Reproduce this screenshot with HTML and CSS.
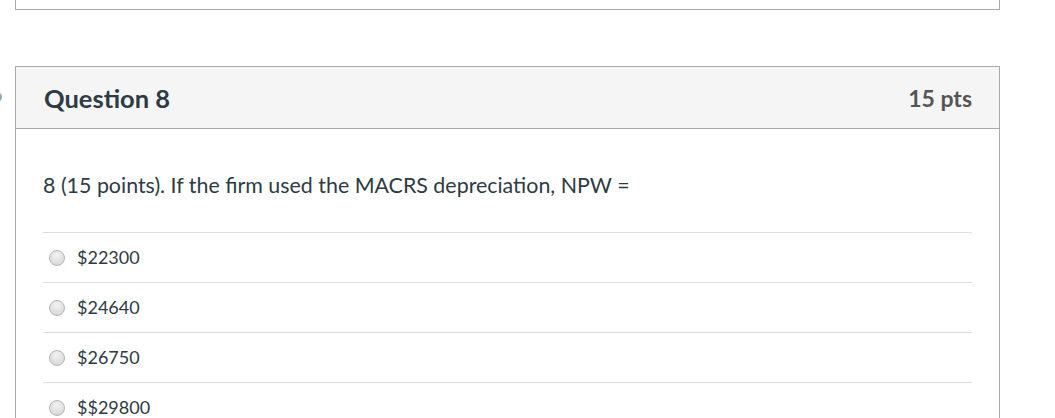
FILE: index.html
```html
<!DOCTYPE html>
<html>
<head>
<meta charset="utf-8">
<link rel="stylesheet" href="styles.css">
</head>
<body>
<div class="page">
  <div class="prev-question"></div>
  <div class="question">
    <span class="nav-mark"></span>
    <div class="question-header">
      <span class="question-name">Question 8</span>
      <span class="question-points">15 pts</span>
    </div>
    <div class="question-body">
      <div class="question-text">8 (15 points). If the firm used the MACRS depreciation, NPW =</div>
      <div class="answers">
        <label class="answer"><span class="radio"></span><span class="answer-text">$22300</span></label>
        <label class="answer"><span class="radio"></span><span class="answer-text">$24640</span></label>
        <label class="answer"><span class="radio"></span><span class="answer-text">$26750</span></label>
        <label class="answer"><span class="radio"></span><span class="answer-text">$$29800</span></label>
      </div>
    </div>
  </div>
</div>
</body>
</html>
```
FILE: styles.css
```css
html, body {
  margin: 0;
  padding: 0;
  background: #fff;
  overflow: hidden;
}
body {
  font-family: Lato, "Open Sans", sans-serif;
  color: #2d3b45;
}
.page {
  padding-left: 15px;
}
.prev-question {
  box-sizing: border-box;
  width: 985px;
  height: 10px;
  border: 1px solid #aaa;
  border-top: none;
}
.question {
  position: relative;
  box-sizing: border-box;
  width: 985px;
  margin-top: 56px;
  border: 1px solid #aaa;
  border-bottom: none;
  height: 400px;
}
.nav-mark {
  position: absolute;
  left: -24px;
  top: 25px;
  width: 10px;
  height: 10px;
  border-radius: 50%;
  background: #8aaabd;
}
.question-header {
  box-sizing: border-box;
  height: 62px;
  background: #f5f5f5;
  border-bottom: 1px solid #aaa;
  display: flex;
  align-items: center;
  justify-content: space-between;
  padding: 0 27px 0 28px;
}
.question-name {
  font-size: 25.5px;
  font-weight: 700;
  color: #2d3b45;
}
.question-points {
  font-size: 23px;
  font-weight: 700;
  color: #555;
}
.question-body {
  padding: 42px 27px 0 27px;
}
.question-text {
  font-size: 21.4px;
  line-height: 28px;
  margin-bottom: 33px;
}
.answers {
  display: flex;
  flex-direction: column;
}
.answer {
  box-sizing: border-box;
  height: 50px;
  border-top: 1px solid #ddd;
  display: flex;
  align-items: center;
  padding-left: 6px;
}
.radio {
  box-sizing: border-box;
  width: 16px;
  height: 16px;
  border-radius: 50%;
  border: 1px solid #b5b5b5;
  background: radial-gradient(circle at 50% 30%, #f2f2f2 0%, #dcdcdc 70%, #cfcfcf 100%);
  margin-right: 12px;
}
.answer-text {
  font-size: 18px;
  color: #2d3b45;
  position: relative;
  top: -1px;
}
```
